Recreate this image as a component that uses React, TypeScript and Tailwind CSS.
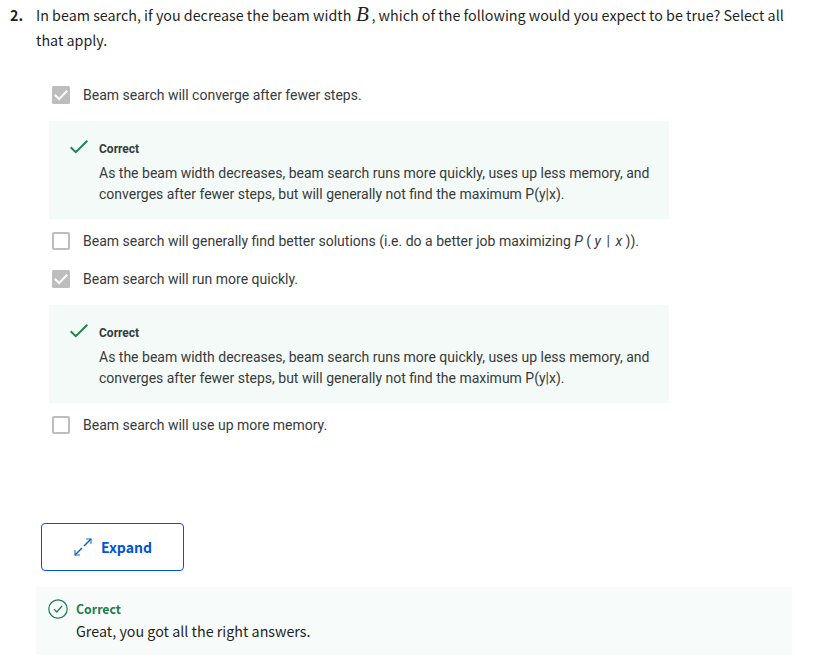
import type { ReactNode } from "react";

function Checked() {
  return (
    <svg className="size-[18px] shrink-0" viewBox="0 0 18 18" fill="none">
      <rect width="18" height="18" rx="1.5" fill="#bdbdbd" />
      <path d="M2.7 8.7 7 13 15.3 4.7" stroke="#fff" strokeWidth="2" />
    </svg>
  );
}

function Option({ checked = false, children }: { checked?: boolean; children: ReactNode }) {
  return (
    <div className="flex h-[38px] items-center gap-[13px] pl-[3px]">
      {checked ? <Checked /> : <span className="size-[18px] shrink-0 rounded-[2px] border-2 border-[#bdbdbd]" />}
      <span className="whitespace-nowrap">{children}</span>
    </div>
  );
}

function Feedback() {
  return (
    <div className="mt-[7px] mb-[3px] flex h-[98px] w-[620px] bg-[#f4faf8] pl-[21px]">
      <svg className="mt-[18px] h-4 w-[18px] shrink-0" viewBox="0 0 18 16" fill="none">
        <path d="M.7 8.2 5.8 13.2 17.3 1.8" stroke="#1d8354" strokeWidth="2" />
      </svg>
      <div className="ml-[11px] pt-[18px] whitespace-nowrap">
        <div className="text-[12px] leading-[21px] font-bold">Correct</div>
        <div className="pt-[3px] leading-[21px]">
          As the beam width decreases, beam search runs more quickly, uses up less memory, and
          <br />
          converges after fewer steps, but will generally not find the maximum P(y|x).
        </div>
      </div>
    </div>
  );
}

export default function App() {
  return (
    <main className="h-[660px] w-[815px] overflow-hidden bg-white font-['Noto_Sans_CJK_SC',sans-serif] text-[#1f1f1f]">
      <div className="flex h-[76px] pt-[2px] pl-[10px] text-[14.3px] leading-[25px]">
        <b className="w-[26px]">2.</b>
        <p className="whitespace-nowrap">
          In beam search, if you decrease the beam width{" "}
          <i className="mr-[2.5px] ml-[1.5px] inline-block font-['Liberation_Serif',serif] text-[21px] leading-none">B</i>, which
          of the following would you expect to be true? Select all
          <br />
          that apply.
        </p>
      </div>
      <section className="ml-[49px] font-[Roboto,sans-serif] text-[14px] text-[#373a3c]">
        <Option checked>Beam search will converge after fewer steps.</Option>
        <Feedback />
        <Option>
          Beam search will generally find better solutions (i.e. do a better job maximizing <i>P</i> ( <i>y</i>
          {" "}
          <span className="mr-[2px] ml-[2px]">|</span> <i>x</i> )).
        </Option>
        <Option checked>Beam search will run more quickly.</Option>
        <Feedback />
        <Option>Beam search will use up more memory.</Option>
      </section>
      <button className="mt-[79px] ml-[41px] flex h-12 w-[143px] items-center rounded-[4px] border border-[#0056d2] pl-8 text-[14px] font-bold text-[#0056d2]">
        <svg className="mr-[9px] size-[18px]" viewBox="0 0 18 18" fill="none" stroke="currentColor">
          <path d="M10 8 17 1M8 10 1 17" strokeWidth="1.4" />
          <path d="M12 1h5v5M1 12v5h5" strokeWidth="1.6" opacity=".6" />
        </svg>
        Expand
      </button>
      <div className="mt-4 ml-9 flex h-[68px] w-[756px] bg-[#f7fbf9] pt-3 pl-3 text-[14.3px] leading-[23px]">
        <svg className="size-5 shrink-0" viewBox="0 0 20 20" fill="none" stroke="#1d7c50" strokeWidth="1.2">
          <circle cx="10" cy="10" r="9.2" />
          <path d="m6 10.2 2.8 2.8L14 7" />
        </svg>
        <div className="ml-2 -mt-px">
          <b className="block h-[21px] text-[12.3px] leading-[22px] text-[#1d7c50]">Correct</b>
          <p>Great, you got all the right answers.</p>
        </div>
      </div>
    </main>
  );
}
